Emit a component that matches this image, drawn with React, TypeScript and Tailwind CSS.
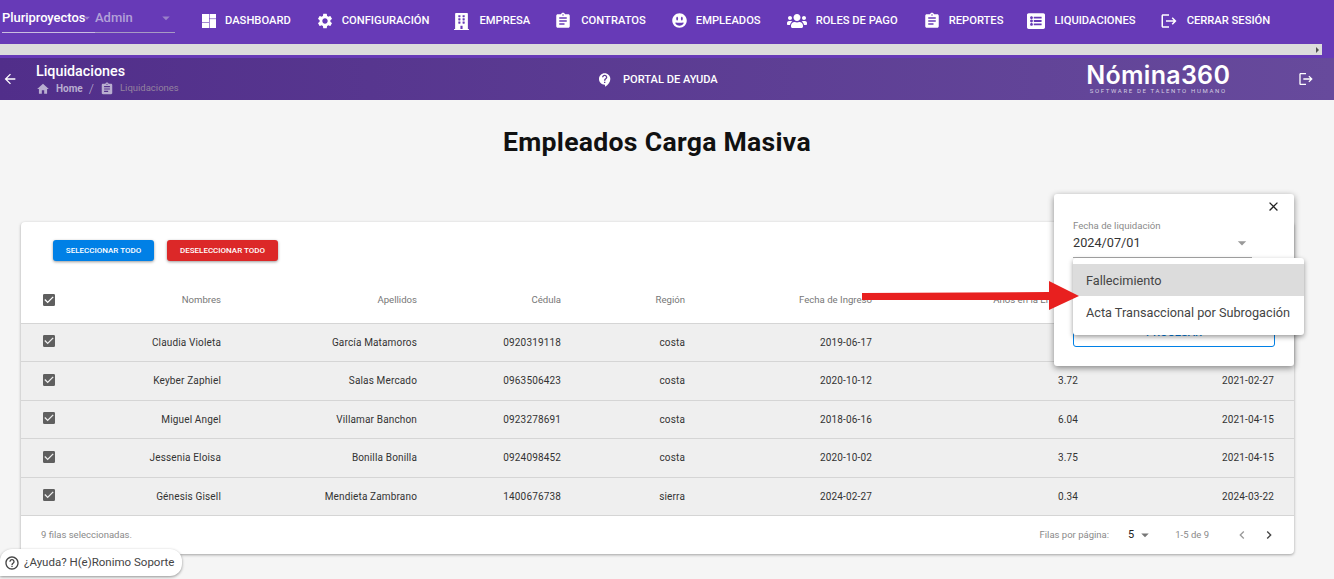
import {
  MdArrowBack,
  MdArrowDropDown,
  MdAssignment,
  MdCheckBox,
  MdChevronLeft,
  MdChevronRight,
  MdClose,
  MdContactSupport,
  MdHelpOutline,
  MdHome,
  MdLogout,
  MdSettings,
} from "react-icons/md";
import { FaBuilding, FaGrinAlt, FaListAlt, FaUsers } from "react-icons/fa";

const DashboardIcon = ({ className }: { className?: string }) => (
  <svg className={className} viewBox="0 0 18 18" fill="currentColor">
    <rect x="2" y="2" width="7" height="8" />
    <rect x="9.6" y="2" width="6.4" height="4.5" />
    <rect x="2" y="10.6" width="7" height="5.4" />
    <rect x="9.6" y="7.1" width="6.4" height="8.9" />
  </svg>
);

const NAV = [
  { label: "Dashboard", Icon: DashboardIcon, iconClass: "size-[18px]", gap: "ml-[7px]", outer: "" },
  { label: "Configuración", Icon: MdSettings, iconClass: "size-[18px]", gap: "ml-[8px]", outer: "ml-px" },
  { label: "Empresa", Icon: FaBuilding, iconClass: "size-[17px]", gap: "ml-[9px]", outer: "" },
  { label: "Contratos", Icon: MdAssignment, iconClass: "size-[18px]", gap: "ml-[9px]", outer: "" },
  { label: "Empleados", Icon: FaGrinAlt, iconClass: "size-[15px]", gap: "ml-[9px]", outer: "ml-[2px]" },
  { label: "Roles de pago", Icon: FaUsers, iconClass: "size-[20px]", gap: "ml-[9px]", outer: "ml-[2px]" },
  { label: "Reportes", Icon: MdAssignment, iconClass: "size-[18px]", gap: "ml-[8px]", outer: "ml-px" },
  { label: "Liquidaciones", Icon: FaListAlt, iconClass: "size-[18px]", gap: "ml-[9px]", outer: "" },
  { label: "Cerrar sesión", Icon: MdLogout, iconClass: "size-[18px]", gap: "ml-[9px]", outer: "" },
];

const ROWS = [
  ["Claudia Violeta", "García Matamoros", "0920319118", "costa", "2019-06-17", "", ""],
  ["Keyber Zaphiel", "Salas Mercado", "0963506423", "costa", "2020-10-12", "3.72", "2021-02-27"],
  ["Miguel Angel", "Villamar Banchon", "0923278691", "costa", "2018-06-16", "6.04", "2021-04-15"],
  ["Jessenia Eloisa", "Bonilla Bonilla", "0924098452", "costa", "2020-10-02", "3.75", "2021-04-15"],
  ["Génesis Gisell", "Mendieta Zambrano", "1400676738", "sierra", "2024-02-27", "0.34", "2024-03-22"],
];

const HEADERS = ["Nombres", "Apellidos", "Cédula", "Región", "Fecha de Ingreso", "Años en la Empresa", ""];

const COLS = "grid grid-cols-[60px_140px_196px_144px_124px_187px_206px_196px] pr-[20px] items-center";

const App = () => {
  return (
    <div className="relative h-[579px] w-[1334px] overflow-hidden bg-[#f5f5f5] font-['Roboto',sans-serif]">
      {/* Top nav */}
      <div className="h-[58px] bg-[#673ab7]">
        <div className="flex h-[44px] items-start">
          <div className="ml-[2px] mt-[4px] flex h-[29px] items-center text-[13px] font-medium">
            <div className="flex h-full w-[93px] items-center border-b border-[#c9bde0]">
              <span className="tracking-[-0.05px] text-white">Pluriproyectos</span>
              <MdArrowDropDown className="-ml-[5px] size-[14px] shrink-0 text-[#9a80c9]" />
            </div>
            <div className="flex h-full w-[80px] items-center border-b border-[#a79ac4]">
              <span className="text-[#b3a1d9]">Admin</span>
              <MdArrowDropDown className="ml-[24px] size-[18px] text-[#9a80c9]" />
            </div>
          </div>
          <div className="ml-[25px] flex h-[40px] items-center gap-[24px] pt-[2px]">
            {NAV.map(({ label, Icon, iconClass, gap, outer }) => (
              <div key={label} className={`flex items-center text-[11.2px] font-medium uppercase text-white ${outer}`}>
                <Icon className={iconClass} />
                <span className={gap}>{label}</span>
              </div>
            ))}
          </div>
        </div>
        <div className="flex h-[11px] w-[1322px] items-center justify-end bg-[#dcdcdc] pr-[3px]">
          <div className="h-0 w-0 border-y-[3px] border-l-[3px] border-y-transparent border-l-[#505050]" />
        </div>
      </div>

      {/* Sub header */}
      <div className="flex h-[42px] items-center bg-gradient-to-r from-[#512e8a] to-[#674a9c] text-white">
        <MdArrowBack className="ml-[2px] size-[16px]" />
        <div className="ml-[18px] w-[530px] pt-px">
          <div className="text-[14.3px] font-medium leading-[17px]">Liquidaciones</div>
          <div className="flex h-[17px] items-center pt-px text-[10px] text-[#b9aed0]">
            <MdHome className="size-[14px]" />
            <span className="ml-[6px] font-bold">Home</span>
            <span className="ml-[6px] text-[13px] font-light">/</span>
            <MdAssignment className="ml-[6px] size-[14px]" />
            <span className="ml-[6px] text-[9.5px] text-[#93829f]">Liquidaciones</span>
          </div>
        </div>
        <MdContactSupport className="ml-[31px] mt-[2px] size-[16px]" />
        <span className="ml-[10px] mt-[2px] text-[11.1px] font-medium uppercase">Portal de ayuda</span>
        <div className="ml-[369px] flex w-[143px] flex-col items-center">
          <span className="font-['Inter',sans-serif] text-[25px] font-semibold leading-[23px] tracking-[0.3px] whitespace-nowrap">Nómina360</span>
          <span className="text-[6px] leading-[7px] tracking-[1.65px] text-[#d3cbe0] whitespace-nowrap">SOFTWARE DE TALENTO HUMANO</span>
        </div>
        <MdLogout className="ml-[68px] size-[16px]" />
      </div>

      {/* Page title */}
      <h1 className="mt-[25px] pr-[20px] text-center text-[26.6px] font-bold leading-[34px] tracking-[0.28px] text-[#111]">Empleados Carga Masiva</h1>

      {/* Table card */}
      <div className="ml-[21px] mt-[63px] w-[1273px] rounded-[4px] bg-white shadow-[0_1px_3px_rgba(0,0,0,0.35)]">
        <div className="flex gap-[13px] pl-[32px] pt-[18px]">
          <button className="h-[21px] w-[101px] rounded-[3px] bg-[#0080e6] text-[8px] font-medium uppercase text-white shadow-[0_1px_3px_rgba(0,0,0,0.4)]">
            Seleccionar todo
          </button>
          <button className="h-[21px] w-[111px] rounded-[3px] bg-[#dc2828] text-[8px] font-medium uppercase text-white shadow-[0_1px_3px_rgba(0,0,0,0.4)]">
            Deseleccionar todo
          </button>
        </div>

        <div className={`${COLS} mt-[22px] h-[40.6px] border-b border-[#d5d5d5] pb-[6px] text-[9.6px] text-[#777]`}>
          <div className="pl-[20px]">
            <MdCheckBox className="size-[16px] text-[#5f5f5f]" />
          </div>
          {HEADERS.map((h) => (
            <div key={h} className="text-right whitespace-nowrap">{h}</div>
          ))}
        </div>

        {ROWS.map((row) => (
          <div key={row[2]} className={`${COLS} h-[38.5px] border-b border-[#d5d5d5] bg-[#efefef] text-[10px] tracking-[0.15px] text-[#333]`}>
            <div className="pb-[2px] pl-[20px]">
              <MdCheckBox className="size-[16px] text-[#5f5f5f]" />
            </div>
            {row.map((cell, i) => (
              <div key={i} className="text-right whitespace-nowrap">{cell}</div>
            ))}
          </div>
        ))}

        <div className="flex h-[37.9px] items-center pl-[20px] pr-[17px] text-[9.5px] text-[#8a8a8a]">
          <span>9 filas seleccionadas.</span>
          <span className="ml-auto">Filas por página:</span>
          <span className="ml-[19px] text-[11px] text-[#222]">5</span>
          <MdArrowDropDown className="ml-[2px] size-[18px] text-[#777]" />
          <span className="ml-[21px]">1-5 de 9</span>
          <MdChevronLeft className="ml-[25px] size-[16px] text-[#9a9a9a]" />
          <MdChevronRight className="ml-[11px] size-[16px] text-[#444]" />
        </div>
      </div>

      {/* Floating panel */}
      <div className="absolute left-[1054px] top-[194px] h-[172px] w-[240px] rounded-[3px] bg-white shadow-[0_2px_6px_rgba(0,0,0,0.45)]">
        <MdClose className="absolute right-[13px] top-[5px] size-[15px] text-[#222]" />
        <div className="ml-[19px] mt-[26px] w-[179px] border-b border-[#a8a8a8] pb-[6px]">
          <div className="text-[9.6px] leading-[11px] text-[#8a8a8a]">Fecha de liquidación</div>
          <div className="mt-[4px] flex items-center justify-between text-[12.7px] leading-[16px] text-[#333]">
            <span>2024/07/01</span>
            <MdArrowDropDown className="-my-[2px] size-[20px] text-[#999]" />
          </div>
        </div>
        <div className="absolute bottom-[19px] left-[19px] flex h-[30px] w-[202px] items-center justify-center rounded-[3px] border border-[#0080e6] pt-[3px] text-[11px] font-medium text-[#0080e6]">
          PROCESAR
        </div>
      </div>

      {/* Select menu */}
      <div className="absolute left-[1073px] top-[258px] h-[77px] w-[231px] rounded-[3px] bg-white pt-[6px] text-[12.7px] text-[#444] shadow-[0_2px_5px_rgba(0,0,0,0.4)]">
        <div className="flex h-[32px] items-center bg-[#dcdcdc] pl-[13px] pt-px">Fallecimiento</div>
        <div className="flex h-[32px] items-center pl-[13px] pt-px whitespace-nowrap">Acta Transaccional por Subrogación</div>
      </div>

      {/* Red arrow annotation */}
      <svg className="absolute left-[860px] top-[280px]" width="222" height="32" viewBox="0 0 222 32">
        <polygon points="2,13 189,12 189,1 219,16 189,30 189,20 2,20" fill="#e8201f" />
      </svg>

      {/* Help chip */}
      <div className="absolute left-0 top-[549px] flex h-[27px] w-[182px] items-center rounded-r-[12px] rounded-tl-[12px] bg-white pl-[4px] text-[11.5px] text-[#444] shadow-[0_1px_3px_rgba(0,0,0,0.4)]">
        <MdHelpOutline className="size-[16px]" />
        <span className="ml-[4px] whitespace-nowrap">¿Ayuda? H(e)Ronimo Soporte</span>
      </div>
    </div>
  );
};

export default App;
